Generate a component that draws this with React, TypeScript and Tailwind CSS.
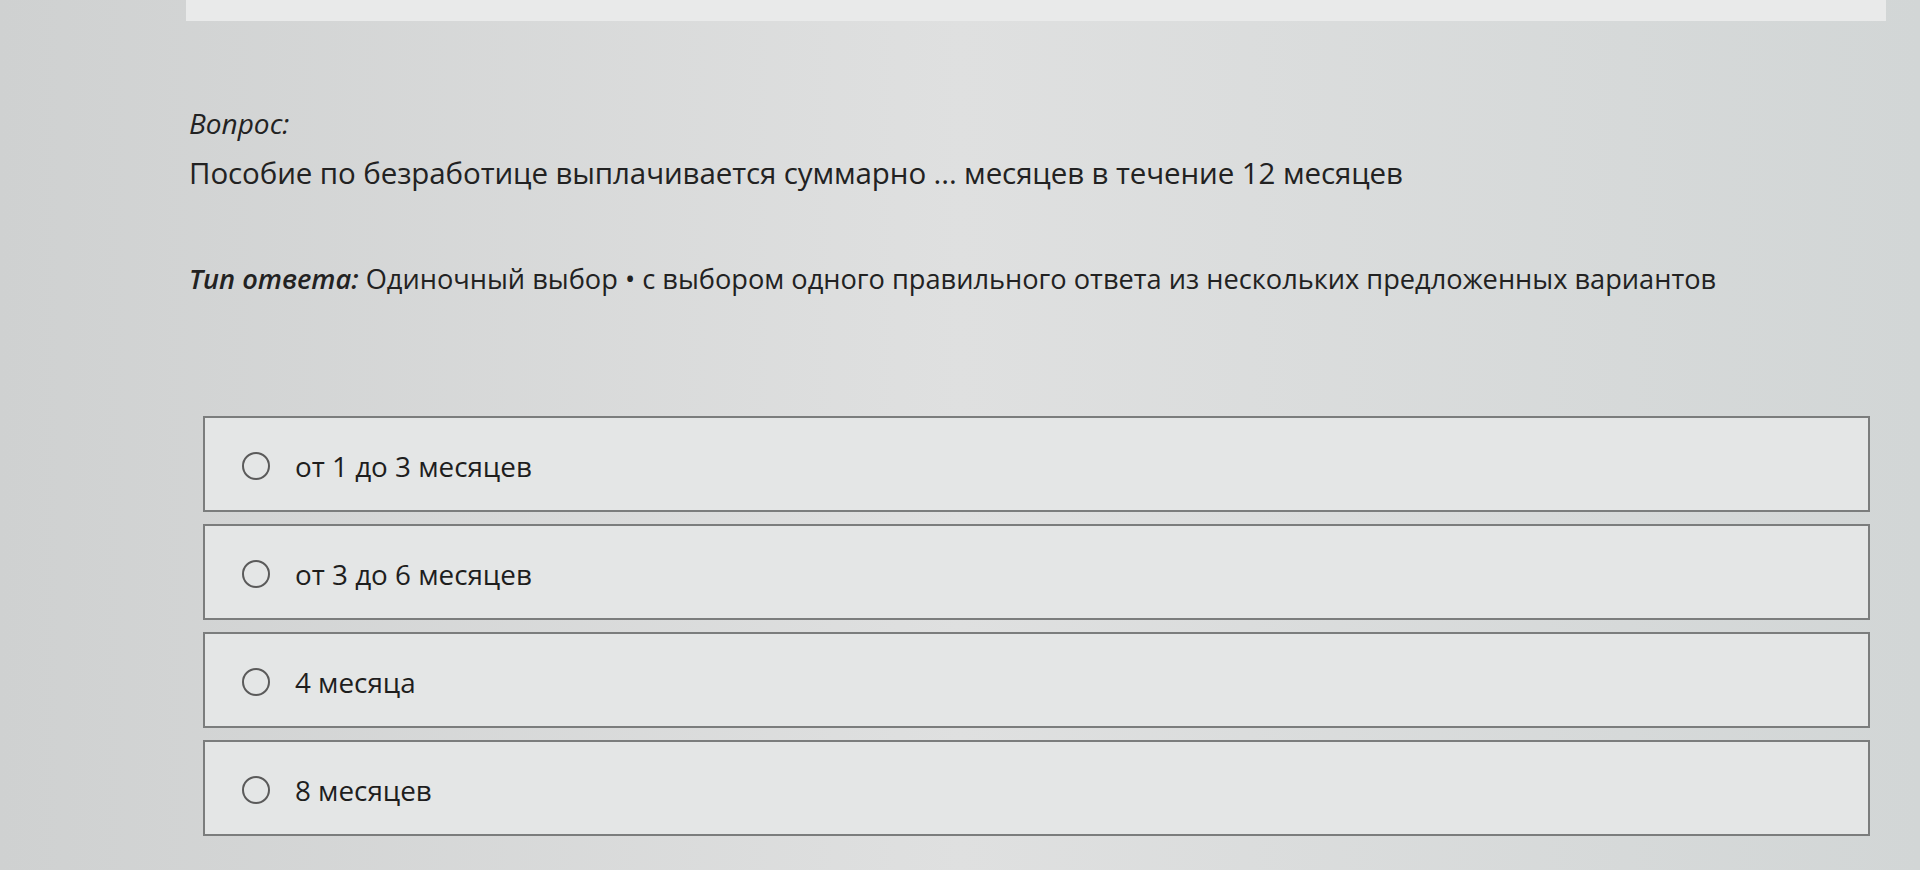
import React from 'react';

const options = ['от 1 до 3 месяцев', 'от 3 до 6 месяцев', '4 месяца', '8 месяцев'];

const App: React.FC = () => {
  return (
    <div
      className="w-full h-[870px] overflow-hidden bg-gradient-to-r from-[#cfd1d1] via-[#dfe0e0] to-[#d2d6d6] text-[#222] flex flex-col"
      style={{ fontFamily: '"Open Sans", "Noto Sans", sans-serif' }}
    >
      {/* top strip */}
      <div className="ml-[186px] w-[1700px] h-[21px] bg-[#e9eaea]" />

      {/* question */}
      <div className="pl-[189px] mt-[84px] flex flex-col">
        <div className="text-[28px] leading-[36px] italic">Вопрос:</div>
        <div className="mt-[14px] text-[29.5px] leading-[36px] tracking-[-0.1px]">
          Пособие по безработице выплачивается суммарно ... месяцев в течение 12 месяцев
        </div>
        <div className="mt-[70px] text-[27.2px] leading-[36px]">
          <span className="italic font-semibold">Тип ответа:</span> Одиночный выбор • с выбором одного правильного ответа из нескольких предложенных вариантов
        </div>
      </div>

      {/* answers */}
      <div className="ml-[203px] mt-[119px] w-[1667px] flex flex-col gap-[12px]">
        {options.map((o) => (
          <label
            key={o}
            className="h-[96px] border-2 border-[#7b7d7d] bg-[#e4e6e6] flex items-center pl-[37px] gap-[25px] pt-[4px] cursor-pointer"
          >
            <span className="w-[28px] h-[28px] rounded-full border-2 border-[#5a5a5a] shrink-0" />
            <span className="text-[27.8px] leading-[36px] text-[#1e1e1e]">{o}</span>
          </label>
        ))}
      </div>
    </div>
  );
};

export default App;
